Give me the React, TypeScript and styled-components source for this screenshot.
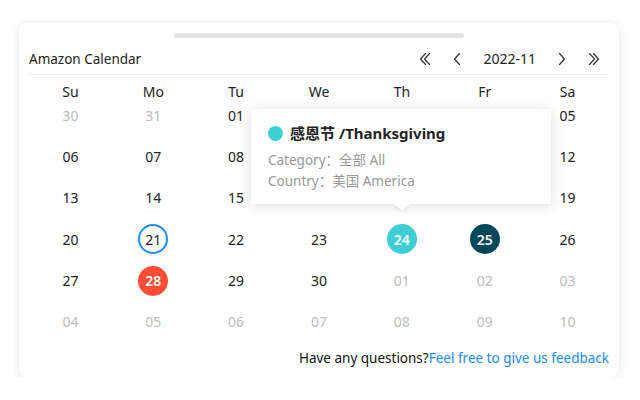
import React from 'react';
import styled, { createGlobalStyle, css } from 'styled-components';

const GlobalStyle = createGlobalStyle`
    html, body {
        margin: 0;
        padding: 0;
        background: #ffffff;
        font-family: "Noto Sans", "Noto Sans CJK SC", sans-serif;
        color: #222;
    }
`;

type DayKind = 'muted' | 'normal' | 'today' | 'holiday' | 'festival' | 'event';

interface Day {
    label: string;
    kind: DayKind;
    covered?: boolean;
}

const WEEKDAYS = ['Su', 'Mo', 'Tu', 'We', 'Th', 'Fr', 'Sa'];

// cells that sit under the open tooltip
const COVERED = [3, 4, 5, 10, 11, 12, 17, 18, 19];

const buildDays = (): Day[] => {
    const days: Day[] = [
        { label: '30', kind: 'muted' },
        { label: '31', kind: 'muted' },
    ];
    for (let d = 1; d <= 30; d++) {
        let kind: DayKind = 'normal';
        if (d === 21) kind = 'today';
        if (d === 24) kind = 'festival';
        if (d === 25) kind = 'event';
        if (d === 28) kind = 'holiday';
        days.push({ label: String(d).padStart(2, '0'), kind });
    }
    for (let d = 1; d <= 10; d++) {
        days.push({ label: String(d).padStart(2, '0'), kind: 'muted' });
    }
    return days.map((d, i) => ({ ...d, covered: COVERED.includes(i) }));
};

const Chevron: React.FC<{ dir: 'left' | 'right'; double?: boolean }> = ({ dir, double }) => {
    const w = double ? 12 : 8;
    const single = dir === 'left' ? 'M6.5 0.5 L1.5 6 L6.5 11.5' : 'M1.5 0.5 L6.5 6 L1.5 11.5';
    return (
        <svg width={w} height={12} viewBox={`0 0 ${w} 12`} fill="none" stroke="#333" strokeWidth={1.2} strokeLinecap="round" strokeLinejoin="round">
            <path d={single} />
            {double && <path d={single} transform="translate(4 0)" />}
        </svg>
    );
};

const App: React.FC = () => {
    const days = buildDays();

    return (
        <>
            <GlobalStyle />
            <Card>
                <ScrollBar />
                <Header>
                    <Title>Amazon Calendar</Title>
                    <Nav>
                        <NavButton><Chevron dir="left" double /></NavButton>
                        <NavButton><Chevron dir="left" /></NavButton>
                        <MonthLabel>2022-11</MonthLabel>
                        <NavButton><Chevron dir="right" /></NavButton>
                        <NavButton><Chevron dir="right" double /></NavButton>
                    </Nav>
                </Header>
                <WeekRow>
                    {WEEKDAYS.map((w) => (
                        <WeekCell key={w}>{w}</WeekCell>
                    ))}
                </WeekRow>
                <DateGrid>
                    {days.map((d, i) => (
                        <DateCell key={i}>
                            <DayMark $kind={d.kind} $covered={d.covered}>{d.label}</DayMark>
                        </DateCell>
                    ))}
                </DateGrid>
                <Footer>
                    Have any questions?<FeedbackLink href="#">Feel free to give us feedback</FeedbackLink>
                </Footer>
                <Tooltip>
                    <TooltipTitle>
                        <Dot />
                        感恩节 /Thanksgiving
                    </TooltipTitle>
                    <TooltipLine>Category：全部 All</TooltipLine>
                    <TooltipLine>Country：美国 America</TooltipLine>
                </Tooltip>
            </Card>
        </>
    );
};

const Card = styled.div`
    position: relative;
    box-sizing: border-box;
    width: 600px;
    height: 354px;
    margin: 23px 0 0 19px;
    padding: 10px 10px 10px;
    background: #fff;
    border-radius: 8px;
    box-shadow: 0 1px 10px rgba(0, 0, 0, 0.11);
`;

const ScrollBar = styled.div`
    width: 290px;
    height: 5px;
    margin: 0 auto;
    border-radius: 3px;
    background: #e4e4e4;
`;

const Header = styled.div`
    display: flex;
    align-items: center;
    justify-content: space-between;
    height: 31px;
    margin-top: 5px;
    border-bottom: 1px solid #ececec;
`;

const Title = styled.div`
    font-size: 13.5px;
    color: #222;
`;

const Nav = styled.div`
    display: flex;
    align-items: center;
    gap: 22px;
    padding-right: 9px;
`;

const NavButton = styled.span`
    display: flex;
    align-items: center;
    cursor: pointer;
`;

const MonthLabel = styled.span`
    font-size: 14px;
    color: #222;
`;

const WeekRow = styled.div`
    display: grid;
    grid-template-columns: repeat(7, 1fr);
    height: 16px;
    margin-top: 9px;
`;

const WeekCell = styled.div`
    text-align: center;
    font-size: 14px;
    line-height: 16px;
    color: #222;
`;

const DateGrid = styled.div`
    display: grid;
    grid-template-columns: repeat(7, 1fr);
    grid-auto-rows: 30px;
    row-gap: 11.4px;
`;

const DateCell = styled.div`
    display: flex;
    align-items: center;
    justify-content: center;
`;

const filled = (bg: string) => css`
    background: ${bg};
    color: #fff;
    font-weight: 600;
`;

const DayMark = styled.span<{ $kind: DayKind; $covered?: boolean }>`
    box-sizing: border-box;
    width: 30px;
    height: 30px;
    border-radius: 50%;
    display: flex;
    align-items: center;
    justify-content: center;
    font-size: 14px;
    color: #222;
    visibility: ${({ $covered }) => ($covered ? 'hidden' : 'visible')};
    ${({ $kind }) => $kind === 'muted' && css`color: #bdbdbd;`}
    ${({ $kind }) => $kind === 'today' && css`border: 2px solid #1a8cff;`}
    ${({ $kind }) => $kind === 'festival' && filled('#3ecfd6')}
    ${({ $kind }) => $kind === 'event' && filled('#00475a')}
    ${({ $kind }) => $kind === 'holiday' && filled('#ff4d36')}
`;

const Footer = styled.div`
    margin-top: 11px;
    text-align: right;
    font-size: 13.5px;
    line-height: 20px;
    color: #111;
`;

const FeedbackLink = styled.a`
    color: #1a8cff;
    text-decoration: none;
`;

const Tooltip = styled.div`
    position: absolute;
    left: 232px;
    top: 86px;
    box-sizing: border-box;
    width: 300px;
    height: 95px;
    padding: 13px 17px 0;
    background: #fff;
    box-shadow: 0 2px 12px rgba(0, 0, 0, 0.14);

    &::after {
        content: '';
        position: absolute;
        left: 143px;
        bottom: -7px;
        width: 0;
        height: 0;
        border-left: 8px solid transparent;
        border-right: 8px solid transparent;
        border-top: 7px solid #fff;
        filter: drop-shadow(0 2px 1px rgba(0, 0, 0, 0.06));
    }
`;

const TooltipTitle = styled.div`
    display: flex;
    align-items: center;
    gap: 7px;
    font-size: 15px;
    font-weight: 700;
    line-height: 22px;
    color: #222;
`;

const Dot = styled.span`
    width: 15px;
    height: 15px;
    border-radius: 50%;
    background: #3ecfd6;
`;

const TooltipLine = styled.div`
    font-size: 13.5px;
    line-height: 21px;
    color: #999;
    ${TooltipTitle} + & {
        margin-top: 6px;
    }
`;

export default App;
